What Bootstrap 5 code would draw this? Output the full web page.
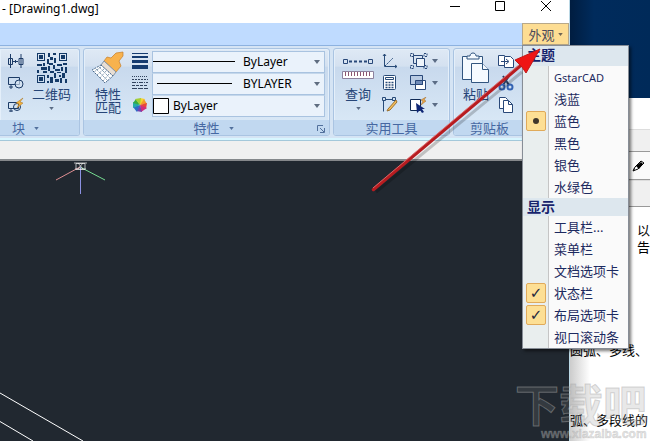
<!DOCTYPE html>
<html lang="zh-CN">
<head>
<meta charset="utf-8">
<meta name="viewport" content="width=device-width, initial-scale=1">
<title>Drawing1.dwg</title>
<link href="https://cdn.jsdelivr.net/npm/bootstrap@5.3.0/dist/css/bootstrap.min.css" rel="stylesheet">
<style>
body{font:13px/13px "Noto Sans","Noto Sans CJK SC",sans-serif;color:#000;background:#fff}
.cad .btn{font:13px/13px "Noto Sans CJK SC",sans-serif}
svg{display:block;flex:none}
.cad{min-width:0;border-right:1px solid #bcd9e6}
.titlebar{height:23px;padding-left:2px}
.titlebar h1{font:12px/18px "Noto Sans",sans-serif;margin:0}
.winbtn{width:45px;height:14px}
.tabs{height:22px;background:#bfdbff}
.tabs .look-btn{width:47px;height:22px;background:#fddd93;border:1px solid #b8a889;color:#4c4a5a;gap:3px}
.ribbon{height:96px;gap:3px;padding:2px 0 4px;background:#d5e4f4;border-top:1px solid #8db2e0;border-bottom:1px solid #a4c8da;box-shadow:inset 0 -2px #d8f6ff}
.tool-panel{border:1px solid #aac4e2;border-radius:3px;background:linear-gradient(#dfe9f5 0,#d4e1f0 20%,#c8d9ed 21%,#dcebf8 100%);box-shadow:inset 0 0 0 1px #e4effa;overflow:hidden}
.panel-block{width:80px;border-left:0;border-radius:0 3px 3px 0}
.panel-prop{flex:1 1 248px;min-width:0}
.panel-util{width:117px}
.panel-clip{width:116px}
.panel-body{height:71px;padding-top:2px}
.panel-foot{height:17px;background:#c1d8f0;color:#4668a2;gap:9px}
.foot-side{flex:1 1 0;display:flex;align-items:center;justify-content:space-between}
.cad .tool-btn{color:#264577;height:66px;gap:3px}
.tool-art{height:33px;display:flex;align-items:center;justify-content:center}
.tool-stack{gap:6px;padding-top:2px}
.tool-stack button{height:16px}
.combos{min-width:0}
.combo{height:22px;border:1px solid #a9c3e0;background:#eaf2fb;padding:0 4px 0 0}
.combo+.combo{border-top-color:#c4d7eb}
.combo select{appearance:none;border:0;background:transparent;font:12px/18px "Noto Sans",sans-serif;min-width:0;padding:0;color:#000}
.strip{height:20px;background:#f0f0f0;border-bottom:2px solid #85888b}
.canvas{background:#212830;overflow:hidden}
.ucs{padding-left:54px}
.desktop{width:80px}
.wall{height:98px;background:linear-gradient(90deg,#001d40,#002b5c 30%,#002a59)}
.caption-band{height:31px;background:#fff}
.tool-band{background:#f0f0f0;height:23px;border-bottom:1px solid #999;border-top:1px solid #ddd}
.tool-band-tall{height:27px}
.pen-band{height:28px;background:#fafafa;border-bottom:1px solid #999;padding-right:5px}
.doc{font:13px/17px "Noto Sans CJK SC",sans-serif;background:linear-gradient(90deg,#ccc,#fff 20px);white-space:nowrap}
.doc-side{height:108px;padding:14px 0 0 67px}
.doc-side p{width:13px;white-space:normal;margin:0}
.doc-line{padding-top:26px;margin:0 0 27px}
.doc-line:last-child{margin-bottom:0}
.look-menu{position:absolute;top:22px;right:-60px;width:107px;z-index:3;background:#fafafa;border:1px solid #878d96;box-shadow:2px 2px 3px #0008;color:#1d2a60}
.look-menu fieldset{min-width:0}
.menu-head{font:bold 14px/18px "Noto Sans","Noto Sans CJK SC",sans-serif;padding-left:4px;margin:0;height:20px;background:#dde7ee;color:#17246c;float:none}
.menu-head-low{height:18px}
.menu-item{height:22px;cursor:pointer}
.gutter{width:26px;background:#e9eeee;border-right:1px solid #c5c5c5;padding-left:3px}
.menu-item input{appearance:none;width:20px;height:20px;margin:0;border-radius:2px;display:grid;place-items:center}
.menu-item input:checked{background:#fddf94;border:1px solid #e0aa5a}
.menu-item input[type=radio]:checked::after{content:"";width:6px;height:6px;border-radius:50%;background:#40372b}
.menu-item input[type=checkbox]:checked::after{content:"✓";font:bold 15px/16px "DejaVu Sans",sans-serif;color:#26283e}
.menu-item span:last-child{padding-left:5px}
.latin{font-size:11px}
.pointer{position:absolute;right:0;top:0;z-index:5;pointer-events:none}
.stamp{position:absolute;right:0;bottom:0;pointer-events:none}
</style>
<script defer src="https://cdn.jsdelivr.net/npm/bootstrap@5.3.0/dist/js/bootstrap.bundle.min.js"></script>
</head>
<body>
<svg width="0" height="0" class="position-absolute" aria-hidden="true">
<defs><symbol id="tri" viewBox="0 0 6 4"><path d="M0 0h6L3 4z"/></symbol></defs>
</svg>
<div class="d-flex min-vh-100 position-relative overflow-hidden">
<main class="cad flex-grow-1 d-flex flex-column">
 <header class="titlebar d-flex bg-white">
  <h1 class="flex-grow-1">- [Drawing1.dwg]</h1>
  <button class="btn border-0 p-0 winbtn" aria-label="最小化"><svg width="45" height="14" fill="none" stroke="#000"><path d="M16 6.500h10"/></svg></button>
  <button class="btn border-0 p-0 winbtn" aria-label="最大化"><svg width="45" height="14" fill="none" stroke="#000"><path d="M16.500 1.500h9v9h-9z"/></svg></button>
  <button class="btn border-0 p-0 winbtn" aria-label="关闭"><svg width="45" height="14" fill="none" stroke="#000"><path d="M17 1l10 10M27 1L17 11"/></svg></button>
 </header>
 <nav class="tabs d-flex justify-content-end">
  <div class="position-relative">
   <button class="look-btn btn rounded-0 p-0 d-flex align-items-center justify-content-center" aria-expanded="true">外观<svg width="5" height="3" fill="#6f6554"><use href="#tri"/></svg></button>
   <form class="look-menu">
    <fieldset>
     <legend class="menu-head">主题</legend>
     <label class="menu-item d-flex align-items-center"><span class="gutter d-flex align-items-center h-100"><input type="radio" name="theme"></span><span class="latin">GstarCAD</span></label>
     <label class="menu-item d-flex align-items-center"><span class="gutter d-flex align-items-center h-100"><input type="radio" name="theme"></span><span>浅蓝</span></label>
     <label class="menu-item d-flex align-items-center"><span class="gutter d-flex align-items-center h-100"><input type="radio" name="theme" checked></span><span>蓝色</span></label>
     <label class="menu-item d-flex align-items-center"><span class="gutter d-flex align-items-center h-100"><input type="radio" name="theme"></span><span>黑色</span></label>
     <label class="menu-item d-flex align-items-center"><span class="gutter d-flex align-items-center h-100"><input type="radio" name="theme"></span><span>银色</span></label>
     <label class="menu-item d-flex align-items-center"><span class="gutter d-flex align-items-center h-100"><input type="radio" name="theme"></span><span>水绿色</span></label>
    </fieldset>
    <fieldset>
     <legend class="menu-head menu-head-low">显示</legend>
     <label class="menu-item d-flex align-items-center"><span class="gutter d-flex align-items-center h-100"><input type="checkbox"></span><span>工具栏...</span></label>
     <label class="menu-item d-flex align-items-center"><span class="gutter d-flex align-items-center h-100"><input type="checkbox"></span><span>菜单栏</span></label>
     <label class="menu-item d-flex align-items-center"><span class="gutter d-flex align-items-center h-100"><input type="checkbox"></span><span>文档选项卡</span></label>
     <label class="menu-item d-flex align-items-center"><span class="gutter d-flex align-items-center h-100"><input type="checkbox" checked></span><span>状态栏</span></label>
     <label class="menu-item d-flex align-items-center"><span class="gutter d-flex align-items-center h-100"><input type="checkbox" checked></span><span>布局选项卡</span></label>
     <label class="menu-item d-flex align-items-center"><span class="gutter d-flex align-items-center h-100"><input type="checkbox"></span><span>视口滚动条</span></label>
    </fieldset>
   </form>
  </div>
 </nav>

 <div class="ribbon d-flex overflow-hidden">
  <section class="tool-panel panel-block flex-shrink-0">
   <div class="panel-body d-flex ps-2">
    <div class="tool-stack d-flex flex-column">
     <button class="btn border-0 p-0" aria-label="块属性"><svg width="16" height="16" fill="none" stroke="#1c3b66"><path d="M.5 5.500h4v6h-4zM11 5.500h4v6h-4zM2.500 1v14M13 1v14M5 8.500h5M7.500 7v3"/></svg></button>
     <button class="btn border-0 p-0" aria-label="创建块"><svg width="16" height="16" fill="none" stroke="#1c3b66"><path d="M.5 2.500h11v7H.500z"/><circle cx="11" cy="9" r="4" fill="#d8e5f3a0"/><path d="M1 12h4M3 10v4"/></svg></button>
     <button class="btn border-0 p-0" aria-label="编辑块"><svg width="16" height="16" fill="none" stroke="#1c3b66"><path d="M.5 5.500h10v6H.500z"/><circle cx="9" cy="10" r="3.500"/><path d="M1 14h4M3 12v3"/><path d="M15 1L8 6l3 1-2 4 6-5-3-1z" fill="#f5b23e" stroke="#a5701e" stroke-width=".5"/></svg></button>
    </div>
    <button class="tool-btn btn border-0 p-0 ms-2 d-flex flex-column align-items-center">
     <span class="tool-art"><svg width="30" height="30" viewBox="0 0 25 25" fill="none" stroke="#143a68" shape-rendering="crispEdges">
      <path d="M.5.500h6v6h-6zM18.500.500h6v6h-6zM.500 18.500h6v6h-6z"/><path fill="#143a68" stroke="none" d="M2 2h3v3H2zM20 2h3v3h-3zM2 20h3v3H2zM18 18h2v2h-2zM9 0h2v3H9zM13 0h3v2h-3zM11 3h2v3h-2zM14 4h2v4h-2zM8 5h2v4H8zM0 9h4v2H0zM5 8h2v3H5zM10 8h3v2h-3zM17 9h4v2h-4zM22 8h3v2h-3zM3 12h5v2H3zM0 14h2v3H0zM9 11h2v4H9zM13 10h2v3h-2zM15 13h4v2h-4zM20 12h2v3h-2zM23 12h2v5h-2zM5 15h3v2H5zM11 15h3v2h-3zM8 18h2v3H8zM14 17h2v4h-2zM17 16h3v1h-3zM21 17h2v4h-2zM11 20h2v5h-2zM8 23h2v2H8zM15 22h3v2h-3zM19 21h2v4h-2zM23 22h2v3h-2z"/></svg></span>
     <span>二维码</span><svg class="mt-1" width="5" height="3" fill="#5b6c85"><use href="#tri"/></svg>
    </button>
   </div>
   <footer class="panel-foot d-flex align-items-center ps-1"><span class="ps-2">块</span><svg width="5" height="3" fill="#52709c"><use href="#tri"/></svg></footer>
  </section>

  <section class="tool-panel panel-prop">
   <div class="panel-body d-flex ps-2 pe-1">
    <button class="tool-btn btn border-0 p-0 d-flex flex-column align-items-center">
     <span class="tool-art"><svg width="32" height="33"><path d="M31 1l-7 1-5 5-4-1-3 4 12 11 5-6-2-5 4-5z" fill="#f8b24d" stroke="#c47c28" stroke-width=".7"/><path d="M12 10l12 11-3 4L9 14z" fill="#e8ded4" stroke="#8394a5"/><path d="M9 14l12 11-8 7L0 19z" fill="#fff" stroke="#49698b" stroke-dasharray="2 1"/><path d="M9 16L2 21M12 18l-7 6M14 20l-6 7M17 23l-6 7M7 16l11 11M4 18l12 12" stroke="#5d7d9b" stroke-dasharray="1 1"/></svg></span>
     <span>特性<br>匹配</span>
    </button>
    <div class="tool-stack d-flex flex-column ms-2 me-1">
     <button class="btn border-0 p-0" aria-label="线宽"><svg width="16" height="16" fill="#153b70"><path d="M0 0h16v1H0zM0 3h16v2H0zM0 7h16v3H0zM0 12h16v4H0z"/></svg></button>
     <button class="btn border-0 p-0" aria-label="线型"><svg width="16" height="16" fill="none" stroke="#31435e"><path d="M0 1.500h16" stroke-dasharray="1 1"/><path d="M0 4.500h16" stroke-dasharray="2 1"/><path d="M0 7.500h16" stroke-dasharray="4 1 1 1"/><path d="M0 10.500h16" stroke-dasharray="3 1"/><path d="M0 13.500h16" stroke-dasharray="5 1"/></svg></button>
     <button class="btn border-0 p-0" aria-label="颜色"><svg width="16" height="16" viewBox="-8 -8 16 16"><path d="M0 0V-7L5-6z" fill="#f7d32e"/><path d="M0 0L4-6 7-1z" fill="#f39a2b"/><path d="M0 0L7-2 6 4z" fill="#e8453c"/><path d="M0 0L7 3 1 7z" fill="#d22c7b"/><path d="M0 0L2 7-4 6z" fill="#7542ad"/><path d="M0 0L-3 7-7 2z" fill="#2c6cc8"/><path d="M0 0L-7 3-7-3z" fill="#24aba8"/><path d="M0 0L-7-2-4-6z" fill="#35ab43"/><path d="M0 0L-5-6 1-7z" fill="#a5cf35"/></svg></button>
    </div>
    <div class="combos flex-grow-1 d-flex flex-column">
     <div class="combo d-flex align-items-center"><svg width="82" height="2"><path d="M0 0h82v1H0z"/></svg><select class="flex-grow-1 ms-2" aria-label="线宽"><option>ByLayer</option></select><svg width="6" height="4" fill="#5f6d80"><use href="#tri"/></svg></div>
     <div class="combo d-flex align-items-center"><svg width="82" height="2"><path d="M4 0h75v1H4z"/></svg><select class="flex-grow-1 ms-2" aria-label="线型"><option>BYLAYER</option></select><svg width="6" height="4" fill="#5f6d80"><use href="#tri"/></svg></div>
     <div class="combo d-flex align-items-center"><svg width="16" height="16" fill="#fff" stroke="#000"><path d="M.5.500h15v15H.500z"/></svg><select class="flex-grow-1 ms-1" aria-label="颜色"><option>ByLayer</option></select><svg width="6" height="4" fill="#5f6d80"><use href="#tri"/></svg></div>
    </div>
   </div>
   <footer class="panel-foot d-flex align-items-center px-1"><span class="foot-side"></span><span>特性</span><span class="foot-side"><svg width="5" height="3" fill="#52709c"><use href="#tri"/></svg><button class="btn border-0 p-0" aria-label="特性设置"><svg width="8" height="8" fill="none" stroke="#52709c"><path d="M.5 6V.500H6M3 3l4 4M7.500 3v4.500H3"/></svg></button></span></footer>
  </section>

  <section class="tool-panel panel-util flex-shrink-0">
   <div class="panel-body d-flex ps-2">
    <button class="tool-btn btn border-0 p-0 d-flex flex-column align-items-center">
     <span class="tool-art"><svg width="32" height="24" fill="none" stroke="#294879"><path d="M1.500 3.500h4v4h-4zM26.500 3.500h4v4h-4z"/><path d="M7 5.500h19" stroke-width="2" stroke-dasharray="3 2"/><path d="M.5 15.500h31v7H.500z" fill="#fff" stroke="#8d829f"/><path d="M3 18h27" stroke="#8d5771" stroke-width="4" stroke-dasharray="1 2"/></svg></span>
     <span>查询</span><svg class="mt-1" width="5" height="3" fill="#5b6c85"><use href="#tri"/></svg>
    </button>
    <div class="tool-stack d-flex flex-column ms-2">
     <button class="btn border-0 p-0" aria-label="坐标"><svg width="16" height="16" fill="none" stroke="#284b78"><path d="M2.500 1v12.500H15M1 3l1.500-2L4 3M13 12l2 1.500-2 1.500"/><path d="M3 13l8-8" stroke-dasharray="2 1"/></svg></button>
     <button class="btn border-0 p-0" aria-label="计算器"><svg width="16" height="16" fill="#fff" stroke="#284b78"><rect x="1.500" y=".5" width="12" height="14" rx="1"/><path d="M3.500 2.500h8v2h-8z"/><path d="M3.500 7.500h9M3.500 10h9M3.500 12.500h9" stroke-width="1.500" stroke-dasharray="2 1"/></svg></button>
     <button class="btn border-0 p-0" aria-label="点样式"><svg width="16" height="16" fill="none" stroke="#284b78"><path d="M1.500 3.500v11M3 2.500h8M.5.500h3v3h-3zM10.500.500h3v3h-3z"/><path d="M14 3L6 12l-1 2 3-1 7-8z" fill="#f7bf5a" stroke="#9b7130"/></svg></button>
    </div>
    <div class="tool-stack d-flex flex-column ms-2 ps-1">
     <button class="btn border-0 p-0 d-flex align-items-center gap-1" aria-label="编组"><svg width="18" height="16" fill="none" stroke="#294879"><path d="M4 2.500h8.500v8H3.500v-8z"/><path d="M6.500 5.500h8v8h-8z" fill="#eef4fb"/><path d="M.5.500h3v3h-3zM14 .5h3v3h-3zM.500 12.500h3v3h-3zM14 12.500h3v3h-3z" stroke-dasharray="2 1"/></svg><svg width="6" height="4" fill="#5b6c85"><use href="#tri"/></svg></button>
     <button class="btn border-0 p-0 d-flex align-items-center gap-1" aria-label="绘图次序"><svg width="18" height="16" stroke="#294879"><path d="M5.500 5.500h10v9h-10z" fill="#fff"/><path d="M.5.500h12v9H.500z" fill="#b9cbe3"/><path d="M5.500 5.500h7v4h-7z" fill="#718cb9"/></svg><svg width="6" height="4" fill="#5b6c85"><use href="#tri"/></svg></button>
     <button class="btn border-0 p-0 d-flex align-items-center gap-1" aria-label="快速选择"><svg width="18" height="16"><path d="M.5 2.500h10v11H.500z" fill="#fff" stroke="#102a55"/><path d="M6 6l1 10 3-3 2 3 2-1-2-3h3z" fill="#102775"/><path d="M16 0l-5 3 2 1-2 4 5-4-2-1z" fill="#efa843" stroke="#9b6932" stroke-width=".5"/></svg><svg width="6" height="4" fill="#5b6c85"><use href="#tri"/></svg></button>
    </div>
   </div>
   <footer class="panel-foot d-flex align-items-center justify-content-center">实用工具</footer>
  </section>

  <section class="tool-panel panel-clip flex-shrink-0">
   <div class="panel-body d-flex ps-2">
    <button class="tool-btn btn border-0 p-0 d-flex flex-column align-items-center">
     <span class="tool-art"><svg width="28" height="32" fill="#f5faff" stroke="#31557f"><path d="M.5 4.500h20v23H.500z"/><path d="M5 7V4h3c0-4 6-4 6 0h3v3z"/><path d="M9.500 11.500h11l6 6v13h-17z"/><path d="M20.500 11.500v6h6"/></svg></span>
     <span>粘贴</span>
    </button>
    <div class="tool-stack d-flex flex-column ms-2">
     <button class="btn border-0 p-0" aria-label="带基点复制"><svg width="16" height="16" fill="#fff" stroke="#294879"><path d="M.5 2.500h6l2 2v8h-8z"/><path d="M6.500 3.500h6l3 3v8h-9z"/><path d="M3 8.500h7M8 6l3 2.500L8 11" fill="none"/></svg></button>
     <button class="btn border-0 p-0" aria-label="剪切"><svg width="16" height="16" fill="none" stroke="#2b3d60" stroke-width="2"><path d="M5 1l6 9M11 1l-6 9"/><circle cx="4" cy="12" r="2.500" stroke="#3463b3"/><circle cx="12" cy="12" r="2.500" stroke="#3463b3"/></svg></button>
     <button class="btn border-0 p-0" aria-label="复制"><svg width="16" height="16" fill="#fff" stroke="#294879"><path d="M1.500.500h6l2 2v9h-8z"/><path d="M5.500 3.500h5l4 4v8h-9z"/><path d="M10.500 3.500v4h4" fill="none"/></svg></button>
    </div>
   </div>
   <footer class="panel-foot d-flex align-items-center ps-3">剪贴板</footer>
  </section>
 </div>
 <div class="strip"></div>
 <div class="canvas flex-grow-1 d-flex flex-column justify-content-between">
  <div class="ucs"><svg width="54" height="34" fill="none"><path d="M26 6L2 19" stroke="#df8e92"/><path d="M26 6l25 13" stroke="#75db91"/><path d="M26.500 6v27" stroke="#8c91e2"/><path d="M22 2.500h9v6h-9zM20 2h13M21 8h11M24 2l5 6M29 2l-5 6" stroke="#f1f1f1" stroke-width=".7"/></svg></div>
  <svg width="90" height="49" fill="none" stroke="#fff"><path d="M0 1l83 48M0 29.500L33 49"/></svg>
 </div>
</main>

<aside class="desktop flex-shrink-0 d-flex flex-column" aria-label="文档窗口">
 <div class="wall"></div>
 <div class="caption-band"></div>
 <div class="tool-band"></div>
 <div class="pen-band d-flex align-items-center justify-content-end"><svg width="13" height="12"><path d="M1 11l2-4 6-6 3 2-6 6z" fill="#fff" stroke="#000"/><path d="M4 6l3 3 4-5-2-2zM1 11l2-2-1-1z"/></svg></div>
 <div class="tool-band tool-band-tall"></div>
 <div class="doc flex-grow-1">
  <div class="doc-side"><p>以告</p></div>
  <p class="doc-line">圆弧、多线、</p>
  <p class="doc-line">弧、多段线的</p>
 </div>
</aside>

<svg class="stamp" width="136" height="60" aria-hidden="true">
 <text x="1" y="41" font-family="Noto Sans CJK SC,sans-serif" font-weight="700" font-size="44" fill="#888" fill-opacity=".2" stroke="#aaa" stroke-opacity=".45">下载吧</text>
 <text x="27" y="57" font-family="Liberation Sans,sans-serif" font-weight="bold" font-size="12" fill="#bbb" fill-opacity=".4" stroke="#999" stroke-opacity=".4" stroke-width=".5">www.xiazaiba.com</text>
</svg>
<svg class="pointer" width="280" height="195" aria-hidden="true">
 <path d="M6 192L152 72" stroke="#0003" stroke-width="3"/>
 <path d="M3.500 189.500L150 66" stroke="#b71c20" stroke-width="3.500" stroke-linecap="round"/>
 <path d="M3 188L149 65" stroke="#e47a7a" stroke-width=".8"/>
 <path d="M170 49l-14 24-4-6-7-7z" fill="#ef1515" stroke="#c11a1a"/>
</svg>
</div>
</body>
</html>
